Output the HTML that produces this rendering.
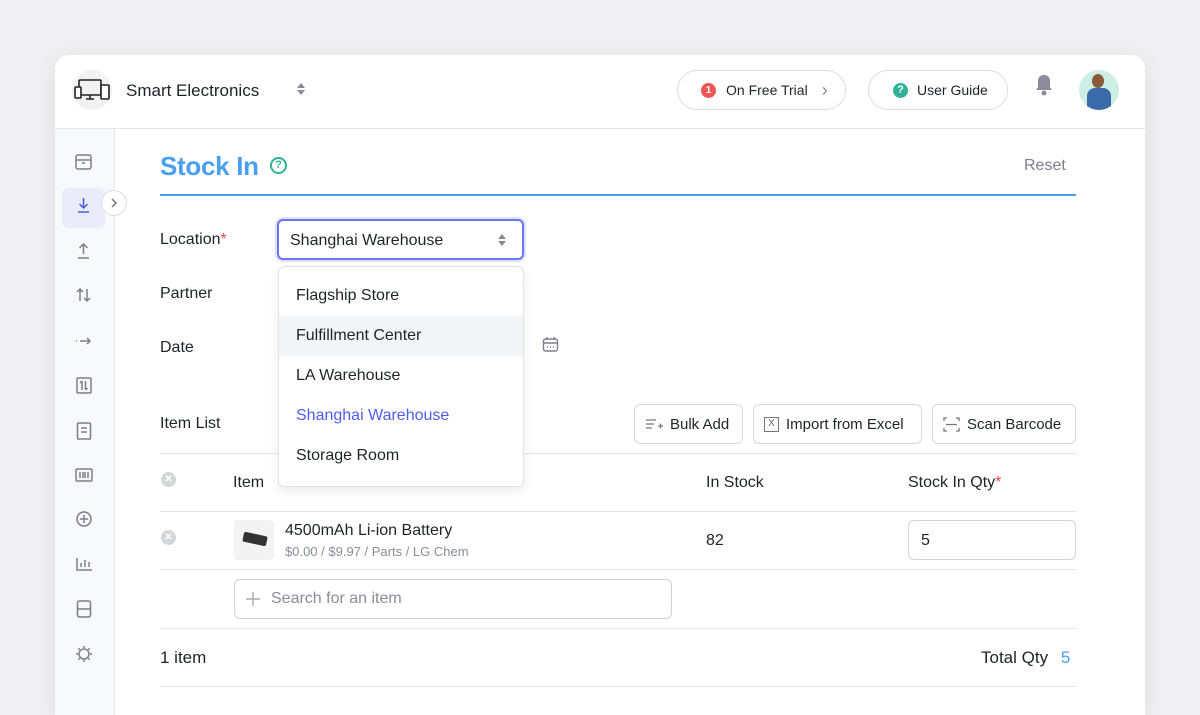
<!DOCTYPE html>
<html><head><meta charset="utf-8"><style>
*{box-sizing:border-box;margin:0;padding:0}
html,body{width:1200px;height:715px;overflow:hidden}
body{background:#f0f0f2;font-family:"Liberation Sans",sans-serif;color:#1f2329;position:relative}
.a{position:absolute}
.card{left:55px;top:55px;width:1090px;height:660px;background:#fff;border-radius:14px 14px 0 0;box-shadow:0 4px 20px rgba(0,0,0,.08);overflow:hidden}
.pill{border:1px solid #dcdde1;border-radius:20px;height:40px;display:flex;align-items:center;font-size:14px;white-space:nowrap}
.btn{border:1px solid #d6d8dc;border-radius:6px;height:40px;display:flex;align-items:center;font-size:15px;top:404px;gap:7px;padding:0 10px;white-space:nowrap}
.lbl{font-size:16px;left:160px}
.hr{height:1px;background:#e4e5e8;left:160px;width:916px}
.dd div{height:40px;line-height:40px;padding-left:17px;font-size:16px}
</style></head><body>
<div class="a card"></div>
<!-- header -->
<div class="a" style="left:55px;top:128px;width:1090px;height:1px;background:#e4e5e8"></div>
<div class="a" style="left:72px;top:70px;width:40px;height:40px;border-radius:50%;background:#f2f2f3"></div>
<svg class="a" style="left:74px;top:78px" width="36" height="24" viewBox="0 0 36 24" fill="none" stroke="#222" stroke-width="1.6"><rect x="5" y="2" width="22" height="15" rx="1"/><path d="M12 21h8M16 17v4"/><rect x="1" y="9" width="6" height="11" rx="1" fill="#fff"/><rect x="27" y="7" width="8" height="14" rx="1" fill="#fff"/></svg>
<div class="a" style="left:126px;top:81px;font-size:17px">Smart Electronics</div>
<svg class="a" style="left:296px;top:82px" width="10" height="14"><path d="M5 1l4 5H1zM5 13l4-5H1z" fill="#888a99"/></svg>
<div class="a pill" style="left:677px;top:70px;width:169px;padding-left:23px"><span style="width:15px;height:15px;border-radius:50%;background:#f05454;color:#fff;font-size:10px;font-weight:bold;display:inline-flex;align-items:center;justify-content:center;margin-right:10px">1</span>On Free Trial<span style="margin-left:14px;color:#888;font-size:18px">›</span></div>
<div class="a pill" style="left:868px;top:70px;width:140px;padding-left:24px"><span style="width:15px;height:15px;border-radius:50%;background:#2eb398;color:#fff;font-size:11px;font-weight:bold;display:inline-flex;align-items:center;justify-content:center;margin-right:9px">?</span>User Guide</div>
<svg class="a" style="left:1033px;top:73px" width="22" height="24" viewBox="0 0 22 24"><path d="M11 2c-4 0-6 3-6 6v6l-2 3h16l-2-3V8c0-3-2-6-6-6z" fill="#8a8c99"/><circle cx="11" cy="20" r="2.5" fill="#8a8c99"/></svg>
<div class="a" style="left:1079px;top:70px;width:40px;height:40px;border-radius:50%;background:#cdeee5;overflow:hidden"><div class="a" style="left:13px;top:4px;width:12px;height:14px;border-radius:50%;background:#8a5a3c"></div><div class="a" style="left:8px;top:18px;width:24px;height:24px;border-radius:8px 8px 0 0;background:#3a6aa8"></div></div>
<!-- sidebar -->
<div class="a" style="left:55px;top:129px;width:60px;height:586px;background:#f8f9fb;border-right:1px solid #e6e7ea"></div>
<div class="a" style="left:62px;top:188px;width:43px;height:40px;border-radius:7px;background:#eaecfb"></div>
<div class="a" style="left:101px;top:190px;width:26px;height:26px;border-radius:50%;background:#fff;border:1px solid #dcdde1"></div>
<svg class="a" style="left:109px;top:197px" width="10" height="12" fill="none" stroke="#777" stroke-width="1.5"><path d="M3 2l4 4-4 4"/></svg>
<svg class="a" style="left:74px;top:152px" width="20" height="520" fill="none" stroke="#7c7f8c" stroke-width="1.5">
<rect x="2" y="3" width="15" height="14" rx="2"/><path d="M2 8h15M8 11h3"/>
<path d="M9.5 46v10M5.5 52l4 4 4-4M4 60h11" stroke="#4c5be6"/>
<path d="M9.5 102v-10M5.5 96l4-4 4 4M4 106h11"/>
<path d="M6 137v12M3 140l3-3 3 3M13 137v12M10 146l3 3 3-3"/>
<path d="M2 189h1M6 189h10M13 186l3 3-3 3"/>
<rect x="3" y="226" width="14" height="15" rx="1"/><path d="M8 229v9M11.5 229v9M6 231l2-2M13.5 236l-2 2"/>
<rect x="3.5" y="271" width="13" height="16" rx="1"/><path d="M7 276h6M7 280h6"/>
<rect x="2" y="317" width="16" height="12" rx="1"/><path d="M6 320v6M9 320v6M11 320v6M14 320v6"/>
<circle cx="10" cy="367" r="7"/><path d="M10 363v8M6 367h8"/>
<path d="M3 406v12h15M7 415v-4M11 415v-7M15 415v-5"/>
<rect x="3.5" y="449" width="13" height="16" rx="2"/><path d="M3.5 457h13"/>
<circle cx="10" cy="502" r="5"/><path d="M10 494v2M10 508v2M2 502h2M16 502h2M4.3 496.3l1.4 1.4M14.3 506.3l1.4 1.4M4.3 507.7l1.4-1.4M14.3 497.7l1.4-1.4"/>
</svg>
<!-- title -->
<div class="a" style="left:160px;top:151px;font-size:26px;color:#4a9ff0;font-weight:bold;letter-spacing:-0.3px">Stock In</div>
<div class="a" style="left:270px;top:157px;width:17px;height:17px;border-radius:50%;border:2px solid #2eb398;color:#2eb398;font-size:11px;font-weight:bold;text-align:center;line-height:13px">?</div>
<div class="a" style="left:1024px;top:157px;font-size:16px;color:#7c7f8c">Reset</div>
<div class="a" style="left:160px;top:194px;width:916px;height:2px;background:#4a9ff0"></div>
<!-- form -->
<div class="a lbl" style="top:231px">Location<span style="color:#f04747">*</span></div>
<div class="a lbl" style="top:285px">Partner</div>
<div class="a lbl" style="top:339px">Date</div>
<div class="a" style="left:277px;top:219px;width:247px;height:41px;border:2px solid #6a76f2;border-radius:6px;box-shadow:0 0 0 2px #dfe2fd;padding:11px 0 0 11px;font-size:16px">Shanghai Warehouse</div>
<svg class="a" style="left:497px;top:233px" width="10" height="14"><path d="M5 1l4 5H1zM5 13l4-5H1z" fill="#888a99"/></svg>
<svg class="a" style="left:542px;top:336px" width="17" height="17" fill="none" stroke="#7c7f8c" stroke-width="1.4"><rect x="1.5" y="3" width="14" height="12" rx="2"/><path d="M1.5 7h14M5 1v3M12 1v3M5 11h1M8 11h1M11 11h1"/></svg>
<div class="a lbl" style="top:415px">Item List</div>
<div class="a btn" style="left:634px;width:109px"><svg width="18" height="14" fill="none" stroke="#777" stroke-width="1.3"><path d="M1 3h10M1 7h8M1 11h6M13 9h5M15.5 6.5v5"/></svg>Bulk Add</div>
<div class="a btn" style="left:753px;width:169px"><span style="width:15px;height:15px;border:1.4px solid #777;font-size:10px;text-align:center;line-height:12px;color:#666">X</span>Import from Excel</div>
<div class="a btn" style="left:932px;width:144px"><svg width="17" height="15" fill="none" stroke="#777" stroke-width="1.3"><path d="M1 4V1h3M13 1h3v3M1 11v3h3M13 14h3v-3M3 7.5h11"/></svg>Scan Barcode</div>
<div class="a hr" style="top:453px"></div>
<div class="a" style="left:161px;top:472px;width:15px;height:15px;border-radius:50%;background:#d5d6da;color:#fff;font-size:10px;text-align:center;line-height:15px;font-weight:bold">✕</div>
<div class="a" style="left:233px;top:474px;font-size:16px">Item</div>
<div class="a" style="left:706px;top:474px;font-size:16px">In Stock</div>
<div class="a" style="left:908px;top:474px;font-size:16px">Stock In Qty<span style="color:#f04747">*</span></div>
<div class="a hr" style="top:511px"></div>
<div class="a" style="left:161px;top:530px;width:15px;height:15px;border-radius:50%;background:#d5d6da;color:#fff;font-size:10px;text-align:center;line-height:15px;font-weight:bold">✕</div>
<div class="a" style="left:234px;top:520px;width:40px;height:40px;border-radius:4px;background:#f3f3f4"></div>
<div class="a" style="left:243px;top:534px;width:24px;height:10px;background:#333;transform:rotate(12deg);border-radius:2px"></div>
<div class="a" style="left:285px;top:522px;font-size:16px">4500mAh Li-ion Battery</div>
<div class="a" style="left:285px;top:544px;font-size:13px;color:#8a8d99">$0.00 / $9.97 / Parts / LG Chem</div>
<div class="a" style="left:706px;top:532px;font-size:16px">82</div>
<div class="a" style="left:908px;top:520px;width:168px;height:40px;border:1px solid #cfd1d6;border-radius:6px;padding:11px 0 0 12px;font-size:16px">5</div>
<div class="a hr" style="top:569px"></div>
<div class="a" style="left:234px;top:579px;width:438px;height:40px;border:1px solid #cfd1d6;border-radius:6px;padding:10px 0 0 36px;font-size:16px;color:#8a8d99">Search for an item</div>
<svg class="a" style="left:245px;top:591px" width="16" height="16" stroke="#aaa" stroke-width="1.4"><path d="M8 1v14M1 8h14"/></svg>
<div class="a hr" style="top:628px"></div>
<div class="a" style="left:160px;top:648px;font-size:17px">1 item</div>
<div class="a" style="left:981px;top:648px;font-size:17px">Total Qty <span style="color:#4a9ff0;margin-left:8px">5</span></div>
<div class="a hr" style="top:686px"></div>
<!-- dropdown -->
<div class="a dd" style="left:278px;top:266px;width:246px;height:221px;background:#fff;border:1px solid #e2e3e6;border-radius:6px;box-shadow:0 4px 12px rgba(0,0,0,.08);padding-top:9px">
<div>Flagship Store</div><div style="background:#f3f4f7">Fulfillment Center</div><div>LA Warehouse</div><div style="color:#4f5ef0">Shanghai Warehouse</div><div>Storage Room</div>
</div>
</body></html>
